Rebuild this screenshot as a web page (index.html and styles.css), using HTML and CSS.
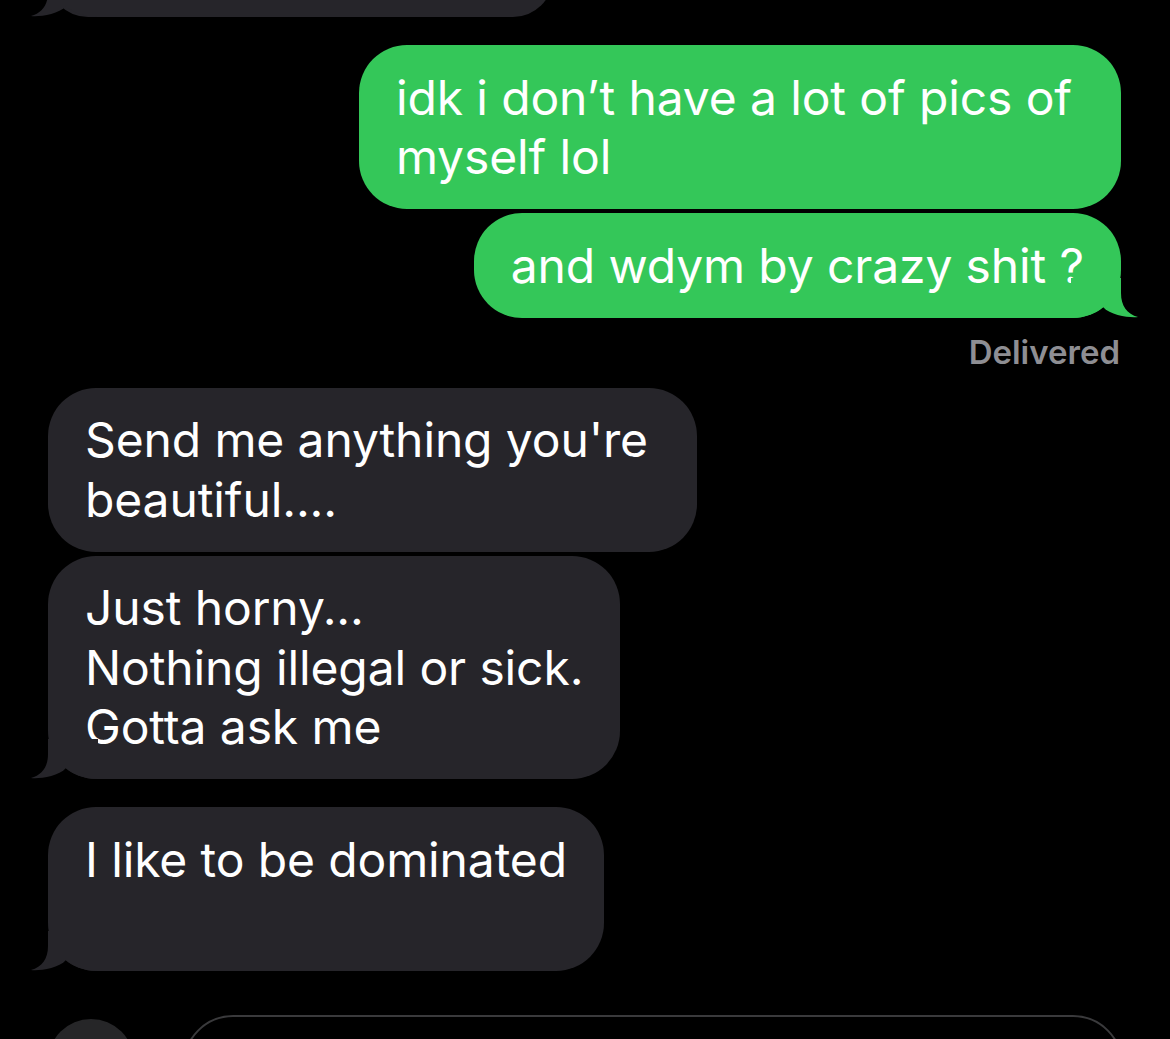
FILE: index.html
```html
<!DOCTYPE html>
<html lang="en">
<head>
<meta charset="utf-8">
<title>Messages</title>
<link rel="stylesheet" href="styles.css">
</head>
<body>
<main class="thread">
  <div class="bubble in tail cut">
    <svg class="tail-svg tail-left" viewBox="0 0 70 40" width="70" height="40"><path d="M70 40 L70 0 L20 0 L20 15 C20 28 14 36 3 39 C10 40 30 38 38 29 C44 35 56 40 70 40 Z"/></svg>
  </div>
  <div class="bubble out wrapped">idk i don’t have a lot of pics of<br>myself lol</div>
  <div class="bubble out tail">and wdym by crazy shit ?
    <svg class="tail-svg tail-right" viewBox="0 0 70 40" width="70" height="40"><path d="M0 40 L0 0 L50 0 L50 15 C50 28 56 36 67 39 C60 40 40 38 32 29 C26 35 14 40 0 40 Z"/></svg>
  </div>
  <div class="status">Delivered</div>
  <div class="bubble in wrapped">Send me anything you're<br>beautiful....</div>
  <div class="bubble in tail">Just horny...<br>Nothing illegal or sick.<br>Gotta ask me
    <svg class="tail-svg tail-left" viewBox="0 0 70 40" width="70" height="40"><path d="M70 40 L70 0 L20 0 L20 15 C20 28 14 36 3 39 C10 40 30 38 38 29 C44 35 56 40 70 40 Z"/></svg>
  </div>
  <div class="bubble in tail">I like to be dominated<br>&nbsp;
    <svg class="tail-svg tail-left" viewBox="0 0 70 40" width="70" height="40"><path d="M70 40 L70 0 L20 0 L20 15 C20 28 14 36 3 39 C10 40 30 38 38 29 C44 35 56 40 70 40 Z"/></svg>
  </div>
  <div class="composer">
    <div class="apps-btn"></div>
    <div class="input-box"></div>
  </div>
</main>
</body>
</html>
```

FILE: styles.css
```css
html, body {
  margin: 0;
  padding: 0;
  background: #000;
  height: 100%;
  overflow: hidden;
}

body {
  font-family: "Inter", "Liberation Sans", Arial, sans-serif;
  color: #fff;
}

.thread {
  display: flex;
  flex-direction: column;
  padding: 0 49px 0 48px;
  height: 100vh;
  overflow: hidden;
  box-sizing: border-box;
}

.bubble {
  position: relative;
  box-sizing: border-box;
  flex: none;
  font-size: 48px;
  line-height: 59.5px;
  letter-spacing: -0.12px;
  padding: 22.5px 37px;
  border-radius: 48px;
  white-space: nowrap;
}

.bubble.wrapped {
  padding-right: 49px;
}

.bubble.in {
  align-self: flex-start;
  background: #26252a;
}

.bubble.out {
  align-self: flex-end;
  background: #34c759;
}

.bubble + .bubble {
  margin-top: 4px;
}

.bubble.tail + .bubble {
  margin-top: 28px;
}

.bubble.cut {
  width: 505px;
  height: 80px;
  margin-top: -63px;
}

.tail-svg {
  position: absolute;
  bottom: 0;
  display: block;
}

.tail-left {
  left: -20px;
}

.tail-right {
  right: -20px;
}

.bubble.in .tail-svg path {
  fill: #26252a;
}

.bubble.out .tail-svg path {
  fill: #34c759;
}

.status {
  align-self: flex-end;
  flex: none;
  font-size: 33px;
  line-height: 40px;
  font-weight: 600;
  color: #8e8e93;
  margin-top: 14px;
  margin-bottom: 16px;
  padding-right: 1px;
}

.composer {
  display: flex;
  align-items: flex-start;
  flex: none;
  gap: 49px;
  margin-top: 44px;
}

.apps-btn {
  width: 86px;
  height: 86px;
  border-radius: 50%;
  background: #262628;
  margin-top: 4px;
  flex: none;
}

.input-box {
  flex: 1;
  height: 100px;
  border: 2px solid #3a3a3c;
  border-radius: 50px;
  margin-right: -2px;
}
```
